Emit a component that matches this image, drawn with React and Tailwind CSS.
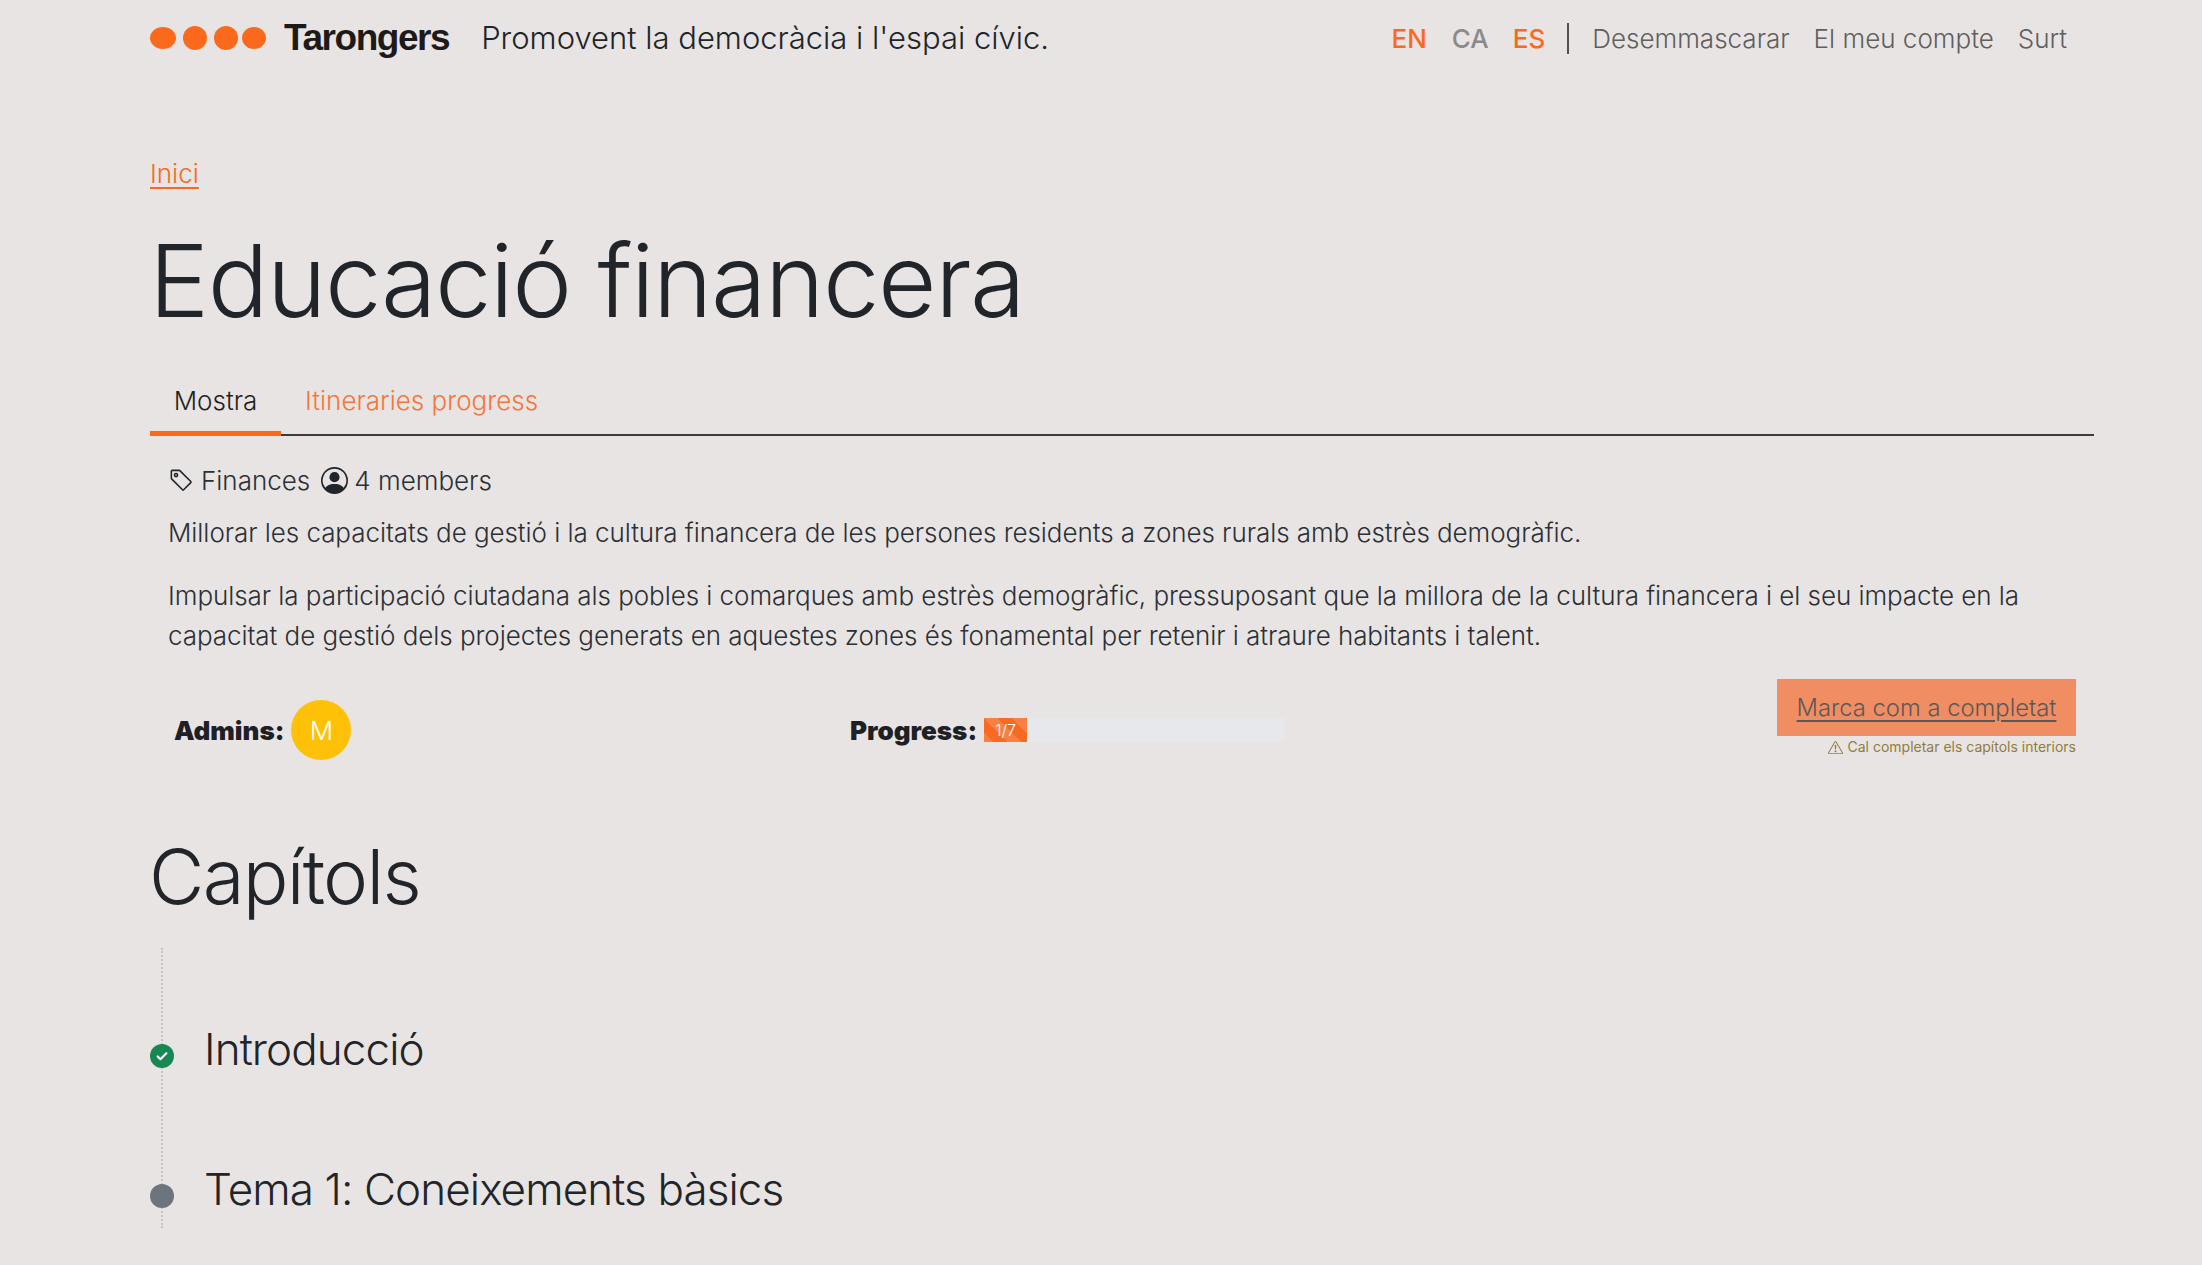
import React from "react";

const Logo = () => (
  <svg width="116" height="24" viewBox="0 0 116 24" className="shrink-0">
    <ellipse cx="13" cy="12" rx="13" ry="11" fill="#fb6a1c" />
    <ellipse cx="45" cy="12" rx="12" ry="12" fill="#fb6a1c" />
    <ellipse cx="76" cy="12" rx="12" ry="12" fill="#fb6a1c" />
    <ellipse cx="104" cy="12" rx="12" ry="11" fill="#fb6a1c" />
  </svg>
);

const TagIcon = () => (
  <svg width="25" height="25" viewBox="0 0 16 16" fill="#212529" className="shrink-0">
    <path d="M6 4.5a1.5 1.5 0 1 1-3 0 1.5 1.5 0 0 1 3 0m-1 0a.5.5 0 1 0-1 0 .5.5 0 0 0 1 0" />
    <path d="M2 1h4.586a1 1 0 0 1 .707.293l7 7a1 1 0 0 1 0 1.414l-4.586 4.586a1 1 0 0 1-1.414 0l-7-7A1 1 0 0 1 1 6.586V2a1 1 0 0 1 1-1m0 5.586 7 7L13.586 9l-7-7H2z" />
  </svg>
);

const PersonIcon = () => (
  <svg width="27" height="27" viewBox="0 0 16 16" fill="#212529" className="shrink-0">
    <path d="M11 6a3 3 0 1 1-6 0 3 3 0 0 1 6 0" />
    <path fillRule="evenodd" d="M0 8a8 8 0 1 1 16 0A8 8 0 0 1 0 8m8-7a7 7 0 0 0-5.468 11.37C3.242 11.226 4.805 10 8 10s4.757 1.225 5.468 2.37A7 7 0 0 0 8 1" />
  </svg>
);

const WarnIcon = () => (
  <svg width="15" height="15" viewBox="0 0 16 16" fill="#8f7d3f" className="shrink-0">
    <path d="M7.938 2.016A.13.13 0 0 1 8.002 2a.13.13 0 0 1 .063.016.15.15 0 0 1 .054.057l6.857 11.667c.036.06.035.124.002.183a.2.2 0 0 1-.054.06.1.1 0 0 1-.066.017H1.146a.1.1 0 0 1-.066-.017.2.2 0 0 1-.054-.06.18.18 0 0 1 .002-.183L7.884 2.073a.15.15 0 0 1 .054-.057m1.044-.45a1.13 1.13 0 0 0-1.96 0L.165 13.233c-.457.778.091 1.767.98 1.767h13.713c.889 0 1.438-.99.98-1.767z" />
    <path d="M7.002 12a1 1 0 1 1 2 0 1 1 0 0 1-2 0M7.1 5.995a.905.905 0 1 1 1.8 0l-.35 3.507a.552.552 0 0 1-1.1 0z" />
  </svg>
);

const Check = () => (
  <svg width="14" height="14" viewBox="0 0 16 16" fill="none" stroke="#fff" strokeWidth="2.4" strokeLinecap="round" strokeLinejoin="round">
    <path d="M3 8.5l3.2 3.2L13 4.8" />
  </svg>
);

export default function App() {
  return (
    <div className="min-h-screen bg-[#e8e4e3] text-[#212529] font-['Inter','Liberation_Sans',sans-serif] overflow-hidden">
      <div className="pl-[150px] pr-[108px]">
        <header className="flex items-center h-[76px]">
          <Logo />
          <span className="ml-[18px] font-['Liberation_Sans',sans-serif] font-bold text-[37px] tracking-[-1.45px] text-[#1d1a19]">Tarongers</span>
          <span className="ml-[32px] text-[31px] font-light text-[#212529]">Promovent la democràcia i l'espai cívic.</span>
          <nav className="ml-auto flex items-center text-[26px] font-light text-[#5f5f5f] pr-[27px]">
            <span className="text-[#fb6a1c] font-medium">EN</span>
            <span className="ml-[25px] text-[#8a8a8a] font-medium">CA</span>
            <span className="ml-[24px] text-[#fb6a1c] font-medium">ES</span>
            <span className="ml-[22px] w-[2px] h-[31px] bg-[#55504e]" />
            <span className="ml-[23px]">Desemmascarar</span>
            <span className="ml-[24px]">El meu compte</span>
            <span className="ml-[24px]">Surt</span>
          </nav>
        </header>

        <div className="mt-[76px]">
          <a className="text-[26px] font-light text-[#f56a20] underline underline-offset-4 leading-[44px] block w-fit">Inici</a>
        </div>

        <h1 className="mt-[24px] -ml-[1px] text-[101px] font-[340] tracking-[-1.45px] leading-[120px] text-[#212529]">Educació financera</h1>

        <div className="mt-[29px] flex border-b-2 border-[#3c3c3c] h-[67px]">
          <div className="w-[131px] h-[67px] border-b-[5px] border-[#fb6a1c] flex items-center justify-center text-[26px] font-light text-[#1f1f1f]">Mostra</div>
          <div className="pl-[24px] flex items-center h-[62px] text-[26px] font-light text-[#f5763a]">Itineraries progress</div>
        </div>

        <div className="px-[18px]">
          <div className="mt-[24px] flex items-center h-[40px] text-[26px] font-light text-[#2b3035]">
            <span className="ml-[1px]"><TagIcon /></span>
            <span className="ml-[7px]">Finances</span>
            <span className="ml-[11px]"><PersonIcon /></span>
            <span className="ml-[6px]">4 members</span>
          </div>

          <p className="mt-[13px] text-[26px] font-light tracking-[-0.06px] leading-[40px] text-[#2b3035]">
            Millorar les capacitats de gestió i la cultura financera de les persones residents a zones rurals amb estrès demogràfic.
          </p>
          <p className="mt-[23px] text-[26px] font-light tracking-[-0.06px] leading-[40px] text-[#2b3035]">
            Impulsar la participació ciutadana als pobles i comarques amb estrès demogràfic, pressuposant que la millora de la cultura financera i el seu impacte en la capacitat de gestió dels projectes generats en aquestes zones és fonamental per retenir i atraure habitants i talent.
          </p>

          <div className="mt-[23px] flex items-start">
            <div className="w-[682px] pl-[6px] pt-[21px] flex items-center">
              <span className="text-[26px] font-black text-[#1d2024]">Admins:</span>
              <span className="ml-[7px] w-[60px] h-[60px] rounded-full bg-[#ffc107] flex items-center justify-center text-[26px] font-light text-white">M</span>
            </div>
            <div className="pt-[21px] h-[81px] flex items-center">
              <span className="text-[26px] font-black text-[#1d2024]">Progress:</span>
              <div className="ml-[7px] w-[300px] h-[24px] bg-[#e6e8eb] flex">
                <div className="w-[43px] h-full bg-[#f76a21] flex items-center justify-center text-[16px] font-light text-white bg-[linear-gradient(45deg,rgba(255,255,255,0.15)_25%,transparent_25%,transparent_50%,rgba(255,255,255,0.15)_50%,rgba(255,255,255,0.15)_75%,transparent_75%,transparent)] bg-[length:28px_28px]">1/7</div>
              </div>
            </div>
            <div className="ml-auto flex flex-col items-end">
              <a className="w-[299px] h-[57px] bg-[#f08d63] flex items-center justify-center text-[23.8px] font-light text-[#5c5955] underline underline-offset-4">Marca com a completat</a>
              <div className="mt-[1px] flex items-center gap-[4px] text-[14px] leading-[20px] text-[#8f7d3f]">
                <WarnIcon />
                <span>Cal completar els capítols interiors</span>
              </div>
            </div>
          </div>
        </div>

        <h2 className="mt-[69px] -ml-[1px] text-[76px] font-light tracking-[-1.7px] leading-[94px] text-[#212529]">Capítols</h2>

        <div className="relative mt-[25px] h-[280px]">
          <div className="absolute left-[11px] top-0 h-[280px] border-l-2 border-dotted border-[#c4c4c4]" />
          <div className="relative pt-[72px] flex items-center h-[132px]">
            <span className="relative top-[6px] w-[24px] h-[24px] rounded-full bg-[#198754] flex items-center justify-center"><Check /></span>
            <span className="relative -top-[1px] ml-[30px] text-[44px] font-light tracking-[-0.9px] leading-[60px] text-[#212529]">Introducció</span>
          </div>
          <div className="relative pt-[80px] flex items-center h-[140px]">
            <span className="relative top-[6px] w-[24px] h-[24px] rounded-full bg-[#6c757d]" />
            <span className="relative -top-[1px] ml-[30px] text-[44px] font-light tracking-[-0.9px] leading-[60px] text-[#212529]">Tema 1: Coneixements bàsics</span>
          </div>
        </div>
      </div>
    </div>
  );
}
